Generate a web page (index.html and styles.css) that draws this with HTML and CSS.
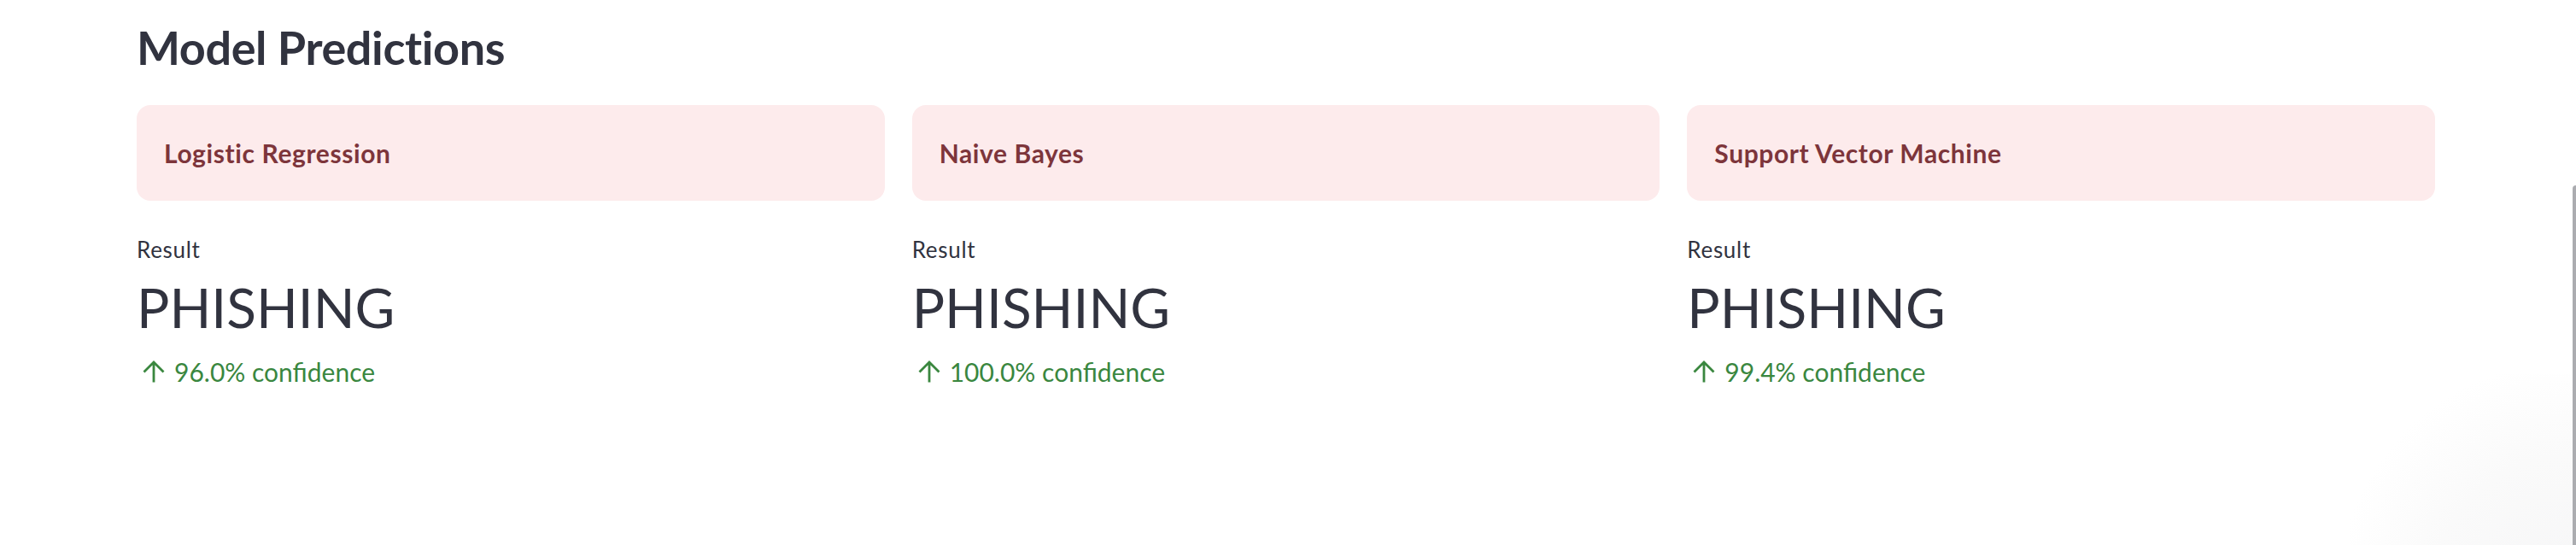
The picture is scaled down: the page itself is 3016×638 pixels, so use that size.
FILE: index.html
```html
<!DOCTYPE html>
<html lang="en">
<head>
<meta charset="utf-8">
<title>Model Predictions</title>
<link rel="stylesheet" href="styles.css">
</head>
<body>
<main class="main">
  <h3 class="title">Model Predictions</h3>
  <div class="columns">
    <section class="col">
      <div class="alert"><strong>Logistic Regression</strong></div>
      <div class="metric">
        <div class="metric-label">Result</div>
        <div class="metric-value">PHISHING</div>
        <div class="metric-delta">
          <svg class="arrow" viewBox="0 0 26 26" aria-hidden="true"><path d="M13 25.5V1.8M1.5 13.5L13 2l11.5 11.5"/></svg>
          <span>96.0% confidence</span>
        </div>
      </div>
    </section>
    <section class="col">
      <div class="alert"><strong>Naive Bayes</strong></div>
      <div class="metric">
        <div class="metric-label">Result</div>
        <div class="metric-value">PHISHING</div>
        <div class="metric-delta">
          <svg class="arrow" viewBox="0 0 26 26" aria-hidden="true"><path d="M13 25.5V1.8M1.5 13.5L13 2l11.5 11.5"/></svg>
          <span>100.0% confidence</span>
        </div>
      </div>
    </section>
    <section class="col">
      <div class="alert"><strong>Support Vector Machine</strong></div>
      <div class="metric">
        <div class="metric-label">Result</div>
        <div class="metric-value">PHISHING</div>
        <div class="metric-delta">
          <svg class="arrow" viewBox="0 0 26 26" aria-hidden="true"><path d="M13 25.5V1.8M1.5 13.5L13 2l11.5 11.5"/></svg>
          <span>99.4% confidence</span>
        </div>
      </div>
    </section>
  </div>
</main>
<div class="scroll-thumb"></div>
<div class="corner-glow"></div>
</body>
</html>
```
FILE: styles.css
```css
html, body {
  margin: 0;
  padding: 0;
  background: #ffffff;
}
body {
  font-family: "Lato", "Noto Sans", sans-serif;
  color: #31333f;
  height: 638px;
  overflow: hidden;
  position: relative;
}
.main {
  padding: 24px 165px 0 160px;
}
.title {
  margin: 0;
  font-size: 54px;
  line-height: 1.2;
  font-weight: 700;
  letter-spacing: -0.4px;
  color: #31333f;
}
.columns {
  display: flex;
  gap: 32px;
  margin-top: 34px;
}
.col {
  flex: 1 1 0;
  min-width: 0;
}
.alert {
  height: 112px;
  box-sizing: border-box;
  padding: 0 32px;
  display: flex;
  align-items: center;
  background: #fdebec;
  border-radius: 16px;
  color: #7d353b;
  font-size: 30px;
  line-height: 1.2;
}
.alert strong {
  font-weight: 700;
  letter-spacing: 0.6px;
}
.metric {
  margin-top: 42px;
}
.metric-label {
  font-size: 26px;
  line-height: 1.2;
  letter-spacing: 0.7px;
  color: #31333f;
}
.metric-value {
  margin-top: 14px;
  font-size: 64px;
  line-height: 1.2;
  font-weight: 400;
  color: #31333f;
}
.metric-delta {
  margin-top: 18px;
  display: flex;
  align-items: center;
  gap: 11px;
  font-size: 30px;
  line-height: 1.2;
  color: #3a873f;
}
.arrow {
  width: 26px;
  height: 26px;
  margin-left: 7px;
  fill: none;
  stroke: #3a873f;
  stroke-width: 2.8;
  stroke-linecap: butt;
  stroke-linejoin: miter;
}
.scroll-thumb {
  position: absolute;
  right: 0;
  top: 217px;
  bottom: 0;
  width: 4px;
  background: #abacb0;
  border-top-left-radius: 4px;
}
.corner-glow {
  position: absolute;
  right: 4px;
  bottom: 0;
  width: 260px;
  height: 200px;
  background: radial-gradient(circle at 100% 130%, #f6f6f7 0, #fafafa 45%, rgba(255,255,255,0) 75%);
  pointer-events: none;
}
```
